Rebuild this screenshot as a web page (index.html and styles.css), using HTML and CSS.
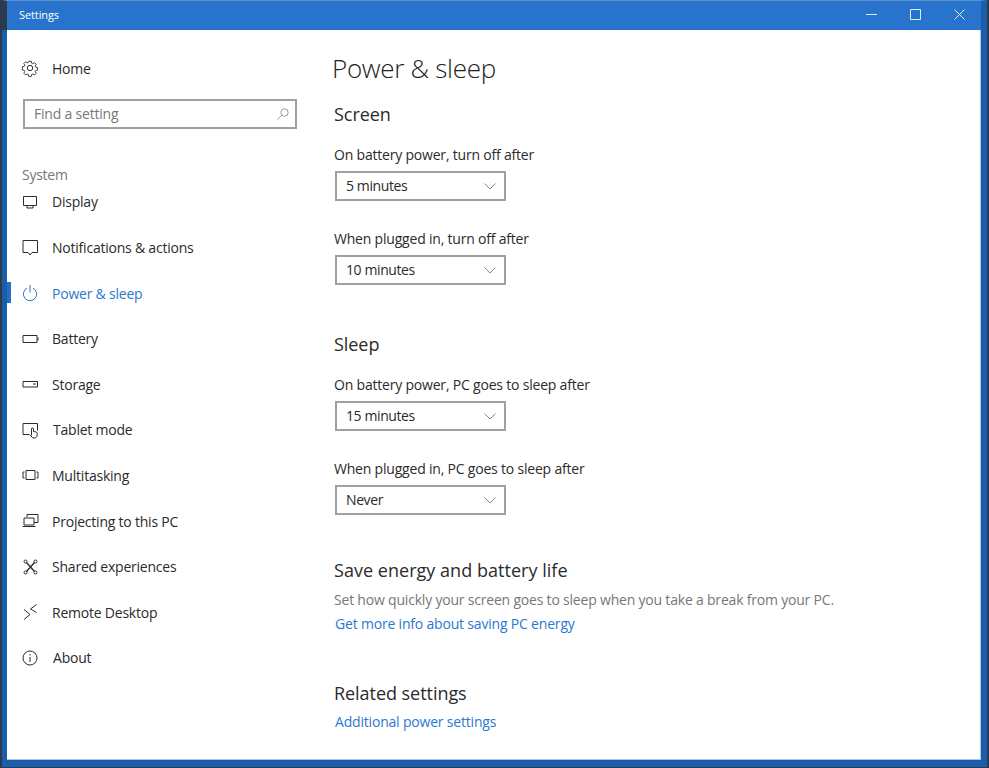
FILE: index.html
```html
<!doctype html>
<html>
<head>
<meta charset="utf-8">
<title>Settings</title>
<link rel="stylesheet" href="styles.css">
</head>
<body>
<div class="window">
	<div class="titlebar">
		<span class="title">Settings</span>
		<div class="controls">
			<svg width="11" height="11" viewBox="0 0 11 11"><path d="M0 5.500h11" /></svg>
			<svg width="11" height="11" viewBox="0 0 11 11"><path d="M.5 .5h10v10H.5z" /></svg>
			<svg width="11" height="11" viewBox="0 0 11 11"><path d="M.5 .5l10 10M10.500 .5l-10 10" /></svg>
		</div>
	</div>
	<div class="content">
		<div class="side">
			<a class="home">
				<svg class="ico" width="18" height="18" viewBox="0 0 18 18"><path d="M7.600 1.500h2.800l.4 2.100 1.300.6 1.800-1.200 2 2-1.200 1.800.6 1.300 2.100.4v2.800l-2.100.4-.6 1.300 1.200 1.800-2 2-1.800-1.200-1.300.6-.4 2.100H7.600l-.4-2.100-1.300-.6-1.800 1.200-2-2 1.200-1.800-.6-1.300-2.100-.4V7.600l2.100-.4.6-1.300-1.200-1.800 2-2 1.800 1.200 1.300-.6z" transform="translate(.9 .9) scale(.9)"/><circle cx="9" cy="9" r="2.700"/></svg>
				<span>Home</span>
			</a>
			<div class="search">
				<span>Find a setting</span>
				<svg width="12" height="12" viewBox="0 0 12 12"><circle cx="7.500" cy="4.500" r="3.700"/><path d="M4.800 7.200L.5 11.500"/></svg>
			</div>
			<div class="group">System</div>
			<ul class="nav">
				<li><svg class="ico" width="18" height="18" viewBox="0 0 18 18"><path d="M2.500 3.500h13v9h-13z"/><path class="fill" d="M6 15h6v-2.500H6z"/></svg>Display</li>
				<li><svg class="ico" width="18" height="18" viewBox="0 0 18 18"><path d="M2 1.500h14.500v12h-5.500l-2 2.500-2-2.500H2z"/></svg>Notifications &amp; actions</li>
				<li class="active"><svg class="ico" width="18" height="18" viewBox="0 0 18 18"><path d="M6 4.200a6.600 6.600 0 1 0 6 0M9 1v7.500"/></svg>Power &amp; sleep</li>
				<li><svg class="ico" width="18" height="18" viewBox="0 0 18 18"><path d="M2 5.500h14v7H2z"/><path d="M17 7.500v3"/></svg>Battery</li>
				<li><svg class="ico" width="18" height="18" viewBox="0 0 18 18"><path d="M2 6.500h14.500v5.500H2zM12 9h3"/></svg>Storage</li>
				<li class="tablet"><svg class="ico" width="18" height="18" viewBox="0 0 18 18"><path d="M8.500 13.500H2V2.500h14.500v7"/><path d="M10.500 14.500V8a1 1 0 0 1 2 0v2.500l3 .5.800 1.500-.5 3-1.500 1.500h-2.500L9 14"/></svg>Tablet mode</li>
				<li><svg class="ico" width="18" height="18" viewBox="0 0 18 18"><path d="M5 4.500h9v9H5zM3.500 6H2v6h1.500M15.500 6H17v6h-1.500"/></svg>Multitasking</li>
				<li><svg class="ico" width="18" height="18" viewBox="0 0 18 18"><path d="M6 5V2.500h11v8h-4"/><path d="M3 6h10v7H3zM1.500 14.500h13"/></svg>Projecting to this PC</li>
				<li><svg class="ico" width="18" height="18" viewBox="0 0 18 18"><circle cx="4.500" cy="3.500" r="1.500"/><circle cx="14.500" cy="3.500" r="1.500"/><circle cx="4.500" cy="14.500" r="1.500"/><circle cx="14.500" cy="14.500" r="1.500"/><path d="M5.500 4.500l8 9M13.500 4.500l-8 9" stroke-width="1.400"/></svg>Shared experiences</li>
				<li><svg class="ico" width="18" height="18" viewBox="0 0 18 18"><path d="M3 6.500l6 5-6 5M15.500 1.500L9.500 6l6 3.500"/></svg>Remote Desktop</li>
				<li class="about"><svg class="ico" width="18" height="18" viewBox="0 0 18 18"><circle cx="9" cy="9" r="7"/><path d="M9 8v5M9 5v1.500"/></svg>About</li>
			</ul>
		</div>
		<div class="main">
			<h1>Power &amp; sleep</h1>
			<h2>Screen</h2>
			<div class="field">
				<label>On battery power, turn off after</label>
				<div class="select"><span>5 minutes</span><svg width="12" height="7" viewBox="0 0 12 7"><path d="M.5 .5L6 6l5.500-5.500"/></svg></div>
			</div>
			<div class="field">
				<label>When plugged in, turn off after</label>
				<div class="select"><span>10 minutes</span><svg width="12" height="7" viewBox="0 0 12 7"><path d="M.5 .5L6 6l5.500-5.500"/></svg></div>
			</div>
			<h2 class="sleep">Sleep</h2>
			<div class="field">
				<label>On battery power, PC goes to sleep after</label>
				<div class="select"><span>15 minutes</span><svg width="12" height="7" viewBox="0 0 12 7"><path d="M.5 .5L6 6l5.500-5.500"/></svg></div>
			</div>
			<div class="field">
				<label>When plugged in, PC goes to sleep after</label>
				<div class="select"><span>Never</span><svg width="12" height="7" viewBox="0 0 12 7"><path d="M.5 .5L6 6l5.500-5.500"/></svg></div>
			</div>
			<h2 class="save">Save energy and battery life</h2>
			<p class="note">Set how quickly your screen goes to sleep when you take a break from your PC.</p>
			<a class="link">Get more info about saving PC energy</a>
			<h2 class="related">Related settings</h2>
			<a class="link">Additional power settings</a>
		</div>
	</div>
</div>
</body>
</html>
```

FILE: styles.css
```css
* { padding: 0; margin: 0; box-sizing: border-box; }
li { list-style: none; }
body { background: #1c5dab; font-family: "Open Sans", "Liberation Sans", sans-serif; font-size: 14px; color: #2b2b2b; }
svg { fill: none; stroke: currentColor; stroke-width: 1; flex: none; }
.window { height: 768px; display: flex; flex-direction: column; padding: 0 6px 7px 5px; border: 2px solid #2b3a4d; border-width: 0 2px 1px; }
.titlebar { height: 30px; margin: 0 -6px 0 -5px; padding: 0 16px 2px 12px; background: #2874cc; border-left: 5px solid #2b3a4d; border-right: 6px solid #1c5dab; border-top: 1px solid #5a8fcc; display: flex; align-items: center; justify-content: space-between; color: #fff; }
.title { font-size: 11px; letter-spacing: -.1px; }
.controls { display: flex; gap: 33px; }
.controls svg { color: #dfeafa; }
.content { flex: 1; background: #fff; display: flex; border: 1px solid #a9c6e8; border-width: 0 1px 1px 0; }

.side { width: 325px; padding: 27px 0 0 15px; flex: none; }
.ico { margin: 0 13px 0 -1px; }
.home { display: flex; align-items: center; height: 22px; letter-spacing: -.25px; }
.search { width: 274px; height: 30px; margin: 20px 0 0 1px; border: 2px solid #a0a0a0; display: flex; align-items: center; justify-content: space-between; padding: 0 6px 2px 9px; color: #777; letter-spacing: -.2px; }
.search svg { color: #999; margin-top: 2px; }
.group { margin-top: 36px; color: #777; letter-spacing: -.25px; line-height: 20px; }
.nav { margin-top: -5.9px; }
.nav li { position: relative; display: flex; align-items: center; height: 45.6px; letter-spacing: -.22px; }
.nav li.active { color: #2a78d0; }
.nav li.active::before { content: ""; position: absolute; left: -15px; top: 12px; width: 4px; height: 21px; background: #1f6fc9; }
.nav li.tablet .ico, .nav li.about .ico { margin-right: 14px; }
.main { flex: 1; padding: 18px 0 0 2px; }
h1 { font-weight: 300; font-size: 26px; line-height: 40px; margin-left: -2px; letter-spacing: -.3px; color: #222; }
h2 { font-weight: normal; font-size: 18px; line-height: 24px; margin-top: 14px; letter-spacing: -.05px; }
.field { margin-top: 19px; }
.field + .field { margin-top: 28px; }
.sleep + .field { margin-top: 19px; }
label { display: block; line-height: 20px; letter-spacing: -.2px; }
.select { width: 171px; height: 30px; margin: 6px 0 0 1px; border: 2px solid #a0a0a0; display: flex; align-items: center; justify-content: space-between; padding: 0 8px 2px 9px; letter-spacing: -.4px; }
.select svg { color: #888; margin-top: 2px; }
.sleep { margin-top: 47px; }
.save { margin-top: 43px; letter-spacing: .03px; }
.note { margin-top: 8px; line-height: 20px; color: #777; letter-spacing: -.2px; }
.link { display: block; margin: 4px 0 0 1px; line-height: 20px; color: #2a78d0; letter-spacing: -.19px; }
.related { margin-top: 47px; }
.related + .link { margin-top: 7px; }
```
